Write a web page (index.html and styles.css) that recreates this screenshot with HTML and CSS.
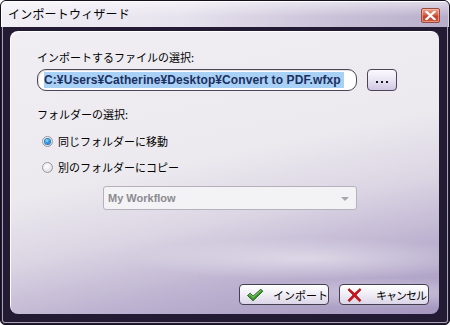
FILE: index.html
```html
<!DOCTYPE html>
<html lang="ja">
<head>
<meta charset="utf-8">
<title>インポートウィザード</title>
<link rel="stylesheet" href="styles.css">
</head>
<body>
<div class="window">
  <div class="titlebar">
    <span class="title">インポートウィザード</span>
    <button class="close" aria-label="閉じる">
      <svg width="11" height="9" viewBox="0 0 11 9"><path d="M1.5 0.8 L9.5 8.2 M9.5 0.8 L1.5 8.2" stroke="#fff" stroke-width="2.2" stroke-linecap="square"/></svg>
    </button>
  </div>
  <div class="panel">
    <div class="label first">インポートするファイルの選択:</div>
    <div class="file-row">
      <div class="input"><span class="sel">C:¥Users¥Catherine¥Desktop¥Convert to PDF.wfxp</span></div>
      <button class="browse"><span class="dot"></span><span class="dot"></span><span class="dot"></span></button>
    </div>
    <div class="label second">フォルダーの選択:</div>
    <div class="radio-row r1"><span class="radio on"></span><span class="rtext">同じフォルダーに移動</span></div>
    <div class="radio-row r2"><span class="radio"></span><span class="rtext">別のフォルダーにコピー</span></div>
    <div class="select"><span class="stext">My Workflow</span><span class="arrow"></span></div>
    <div class="footer">
      <button class="btn">
        <svg class="ico" width="18" height="14" viewBox="0 0 18 14"><path d="M1.5 7.5 L4.2 5.2 L7 8.2 L14.8 1.2 L16.8 3.2 L7 12.8 Z" fill="#3e9a2e" stroke="#1f5a17" stroke-width="0.9" stroke-linejoin="round"/><path d="M3 7.4 L4.2 6.4 L7 9.3 L14.8 2.4" fill="none" stroke="#8fd67a" stroke-width="0.9"/></svg>
        <span class="btext">インポート</span>
      </button>
      <button class="btn cancel">
        <svg class="ico x" width="15" height="16" viewBox="0 0 15 16"><path d="M2 1.5 L7.5 6.3 L13 1.5 L14 3 L9 8 L14 13.2 L12.6 14.8 L7.5 9.8 L2.4 14.8 L1 13.2 L6 8 L1 3 Z" fill="#d0141a" stroke="#8a0a0e" stroke-width="0.6" stroke-linejoin="round"/></svg>
        <span class="btext">キャンセル</span>
      </button>
    </div>
  </div>
</div>
</body>
</html>
```
FILE: styles.css
```css
html, body {
  margin: 0;
  padding: 0;
  width: 450px;
  height: 325px;
  overflow: hidden;
  background: #ffffff;
}
.window {
  box-sizing: border-box;
  width: 450px;
  height: 325px;
  border: 1px solid #15101f;
  border-radius: 6px 6px 5px 5px;
  background: #231b33;
  box-shadow: inset 0 0 0 1px #231b33, inset 0 0 0 2px #a8a2b4;
  display: flex;
  flex-direction: column;
  font-family: "Noto Sans CJK JP", "Liberation Sans", sans-serif;
  color: #000;
}
.titlebar {
  height: 26px;
  flex: none;
  display: flex;
  align-items: center;
  padding: 0 9px 0 7px;
  border-radius: 5px 5px 0 0;
  background:
    linear-gradient(to bottom, rgba(255,255,255,0.55) 0%, rgba(255,255,255,0) 60%),
    linear-gradient(to right, #f1eff5 0%, #e7e3ee 40%, #c9c1d8 75%, #b8aecb 100%);
  box-shadow: inset 1px 1px 0 #ffffff, inset -1px 0 0 #d9d4e2;
}
.title {
  font-size: 12px;
  line-height: 16px;
  flex: 1;
  letter-spacing: 0.2px;
}
.close {
  width: 19px;
  height: 15px;
  margin-top: 3px;
  padding: 0;
  border: 1px solid #9a4a3c;
  border-radius: 2px;
  background: linear-gradient(to bottom, #eda08a 0%, #d9654c 45%, #c2412c 55%, #cf5a40 100%);
  display: flex;
  align-items: center;
  justify-content: center;
  box-shadow: inset 0 0 0 1px rgba(255,220,210,0.45);
}
.panel {
  flex: 1;
  margin: 4px 10px 10px 9px;
  border-radius: 8px;
  display: flex;
  flex-direction: column;
  padding: 18px 10px 9px 27px;
  background:
    radial-gradient(ellipse 260px 30px at 300px 228px, rgba(255,255,255,0.45), rgba(255,255,255,0) 70%),
    radial-gradient(ellipse 220px 22px at 380px 262px, rgba(255,255,255,0.35), rgba(255,255,255,0) 70%),
    linear-gradient(168deg, #f0eef3 0%, #eceaef 45%, #dcd6e4 62%, #bdb2d0 80%, #a597bf 100%);
  box-shadow: inset 1px 1px 0 #ffffff;
}
.label {
  font-size: 11px;
  line-height: 16px;
  height: 16px;
}
.label.second { margin-top: 15px; }
.file-row {
  display: flex;
  margin-top: 4px;
  height: 22px;
}
.input {
  box-sizing: border-box;
  width: 320px;
  height: 22px;
  border: 1px solid #4c4656;
  border-radius: 9px;
  background: #ffffff;
  display: flex;
  align-items: center;
  padding-left: 6px;
  box-shadow: inset 1px 1px 1px rgba(0,0,0,0.12);
}
.sel {
  font-family: "Liberation Sans", Arial, sans-serif;
  font-weight: bold;
  font-size: 12px;
  line-height: 16px;
  background: #a9d0f5;
  color: #1b2f60;
  padding-right: 3px;
  letter-spacing: 0.1px;
  white-space: nowrap;
}
.browse {
  box-sizing: border-box;
  width: 30px;
  height: 22px;
  margin-left: 10px;
  padding: 0;
  border: 1px solid #4c4558;
  border-radius: 4px;
  background: linear-gradient(to bottom, #fbfaff 0%, #e9e5f2 50%, #cfc7e2 100%);
  display: flex;
  align-items: center;
  justify-content: center;
  gap: 3px;
  padding-top: 3px;
}
.dot {
  width: 2px;
  height: 2px;
  background: #1a1626;
}
.radio-row {
  display: flex;
  align-items: center;
  height: 16px;
  padding-left: 5px;
}
.radio-row.r1 { margin-top: 11px; }
.radio-row.r2 { margin-top: 10px; }
.radio {
  box-sizing: border-box;
  width: 11px;
  height: 11px;
  border-radius: 50%;
  border: 1px solid #9a98a0;
  background: radial-gradient(circle at 40% 35%, #ffffff 0%, #e6e5ea 60%, #c9c8cf 100%);
  flex: none;
  display: flex;
  align-items: center;
  justify-content: center;
}
.radio.on::after {
  content: "";
  width: 5px;
  height: 5px;
  border-radius: 50%;
  background: radial-gradient(circle at 40% 35%, #9fe0ff 0%, #1a8fd8 55%, #0b5ea8 100%);
  box-shadow: 0 0 0 1px #2a7cc0;
}
.rtext {
  font-size: 11px;
  line-height: 16px;
  margin-left: 5px;
}
.select {
  box-sizing: border-box;
  width: 254px;
  height: 24px;
  margin-top: 11px;
  margin-left: 66px;
  border: 1px solid #b6b2bd;
  border-radius: 3px;
  background: #f3f2f4;
  display: flex;
  align-items: center;
  padding: 0 7px 0 4px;
}
.stext {
  flex: 1;
  font-family: "Liberation Sans", Arial, sans-serif;
  font-weight: bold;
  font-size: 11px;
  color: #8c8a90;
}
.arrow {
  width: 0;
  height: 0;
  border-left: 4px solid transparent;
  border-right: 4px solid transparent;
  border-top: 4px solid #a9a7ad;
  margin-top: 2px;
}
.footer {
  margin-top: auto;
  display: flex;
  justify-content: flex-end;
  gap: 10px;
}
.btn {
  box-sizing: border-box;
  width: 90px;
  height: 21px;
  padding: 0 0 0 6px;
  border: 1px solid #45404f;
  border-radius: 4px;
  background: linear-gradient(to bottom, #ffffff 0%, #f1eff6 45%, #dcd6e8 100%);
  display: flex;
  align-items: center;
  font-family: "Noto Sans CJK JP", "Liberation Sans", sans-serif;
  color: #000;
  white-space: nowrap;
  overflow: hidden;
}
.ico { flex: none; }
.ico.x { margin-left: 1px; }
.btext {
  font-size: 11px;
  line-height: 16px;
  margin-left: 9px;
  white-space: nowrap;
}
.cancel .btext {
  margin-left: 14px;
  letter-spacing: -1px;
}
```
